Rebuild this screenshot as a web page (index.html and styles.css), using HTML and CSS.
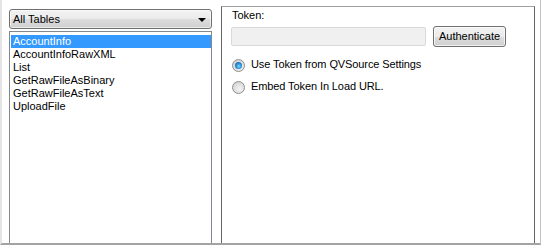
FILE: index.html
```html
<!doctype html>
<html lang="en">
  <head>
    <meta charset="utf-8" />
    <title>QVSource Connector</title>
    <link rel="stylesheet" href="styles.css">
  </head>
  <body>
    <div class="frame">
      <div class="tables">
        <div class="combo">
          <span>All Tables</span>
          <span class="combo-arrow"></span>
        </div>
        <ul class="table-list">
          <li class="selected">AccountInfo</li>
          <li>AccountInfoRawXML</li>
          <li>List</li>
          <li>GetRawFileAsBinary</li>
          <li>GetRawFileAsText</li>
          <li>UploadFile</li>
        </ul>
      </div>

      <div class="panel">
        <div class="label">Token:</div>
        <div class="token-row">
          <div class="token-input"></div>
          <div class="button">Authenticate</div>
        </div>
        <div class="radios">
          <div class="radio-row"><span class="radio checked"></span>Use Token from QVSource Settings</div>
          <div class="radio-row"><span class="radio"></span>Embed Token In Load URL.</div>
        </div>
      </div>
    </div>
  </body>
</html>
```

FILE: styles.css
```css
/* body tags */
body {
    margin: 0;
    font-family: "Liberation Sans", Arial, sans-serif;
    font-size: 11px;
    color: #000;
}
ul { margin: 0; padding: 0; list-style: none; }

/* layout */
.frame {
    box-sizing: border-box;
    width: 541px;
    height: 245px;
    display: flex;
    padding-left: 7px;
    background: #fff;
    border-left: 2px solid #e4e4e4;
    border-right: 1px solid #c4c4c4;
    border-bottom: 2px solid #a3a3a3;
    overflow: hidden;
}
.tables {
    width: 203px;
    padding-top: 9px;
    display: flex;
    flex-direction: column;
}

/* dropdown */
.combo {
    box-sizing: border-box;
    height: 20px;
    display: flex;
    align-items: center;
    justify-content: space-between;
    padding: 0 5px 0 3px;
    border: 1px solid #707070;
    border-radius: 3px;
    background: linear-gradient(#f2f2f2 0%, #ebebeb 50%, #dddddd 51%, #cfcfcf 100%);
    box-shadow: inset 0 0 0 1px rgba(255,255,255,0.6);
}
.combo-arrow {
    width: 0;
    height: 0;
    border-left: 4px solid transparent;
    border-right: 4px solid transparent;
    border-top: 4px solid #000;
    margin-top: 1px;
}

/* list */
.table-list {
    flex: 1;
    margin-top: 2px;
    padding: 3px 0 0 1px;
    border: 1px solid #828790;
    border-bottom: none;
}
.table-list li {
    height: 13px;
    line-height: 13px;
    padding-left: 2px;
    white-space: nowrap;
}
.table-list li.selected {
    background: #3399ff;
    color: #fff;
}

/* right panel */
.panel {
    box-sizing: border-box;
    width: 314px;
    margin: 6px 0 0 9px;
    padding: 2px 0 0 10px;
    border: 1px solid #646464;
    border-top-color: #a0a0a0;
    border-bottom: none;
}
.label {
    line-height: 13px;
}
.token-row {
    display: flex;
    align-items: center;
    margin-top: 4px;
    height: 21px;
}
.token-input {
    box-sizing: border-box;
    width: 195px;
    height: 19px;
    margin-left: -1px;
    border: 1px solid #d9d9d9;
    border-radius: 2px;
    background: #f0f0f0;
}
.button {
    box-sizing: border-box;
    height: 21px;
    width: 73px;
    margin-left: 7px;
    line-height: 19px;
    text-align: center;
    border: 1px solid #707070;
    border-radius: 3px;
    background: linear-gradient(#f2f2f2 0%, #ebebeb 50%, #dddddd 51%, #cfcfcf 100%);
    box-shadow: inset 0 0 0 1px rgba(255,255,255,0.7);
}

/* radio buttons */
.radios { margin-top: 6px; }
.radio-row {
    display: flex;
    align-items: center;
    height: 22px;
    letter-spacing: -0.1px;
}
.radio {
    box-sizing: border-box;
    width: 13px;
    height: 13px;
    margin: 3px 6px 0 0;
    border: 1px solid #8f8f8f;
    border-radius: 50%;
    background: radial-gradient(circle at 60% 65%, #f4f4f4 0%, #dedede 55%, #c8c8c8 100%);
    display: flex;
    align-items: center;
    justify-content: center;
}
.radio.checked::after {
    content: "";
    width: 7px;
    height: 7px;
    border-radius: 50%;
    background: radial-gradient(circle at 55% 60%, #7fdcff 0%, #2b8fd6 45%, #0d4a86 100%);
}
```
